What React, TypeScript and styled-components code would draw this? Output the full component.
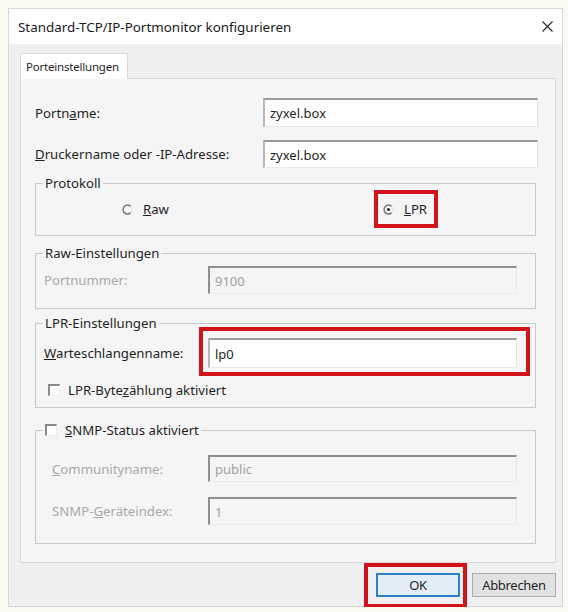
import React from "react";
import styled, { createGlobalStyle } from "styled-components";

const Global = createGlobalStyle`
  html, body { margin: 0; padding: 0; background: #fbfaf1; }
  body {
    font-family: "Noto Sans", "Open Sans", sans-serif;
    color: #1f1f1f;
    font-size: 13.2px;
  }
  * { box-sizing: border-box; }
`;

const Window = styled.div`
  margin: 8px 0 0 8px;
  width: 555px;
  height: 599px;
  background: #f0f0f0;
  border: 1px solid #d6d6d6;
  display: flex;
  flex-direction: column;
`;

const TitleBar = styled.div`
  height: 35px;
  flex: none;
  background: #ffffff;
  display: flex;
  align-items: center;
  justify-content: space-between;
  padding: 0 9px;
  font-size: 13.4px;
  color: #1a1a1a;
`;

const CloseIcon = styled.svg`
  width: 11px;
  height: 11px;
  display: block;
`;

const Body = styled.div`
  flex: 1;
  display: flex;
  flex-direction: column;
  padding: 9px 6px 0 11px;
`;

const TabStrip = styled.div`
  display: flex;
  height: 25px;
`;

const Tab = styled.div`
  position: relative;
  z-index: 1;
  width: 108px;
  height: 26px;
  margin-bottom: -1px;
  background: #ffffff;
  border: 1px solid #d9d9d9;
  border-bottom: none;
  display: flex;
  align-items: center;
  padding-left: 5px;
  font-size: 11.5px;
  letter-spacing: -0.2px;
`;

const Panel = styled.div`
  height: 485px;
  background: #f5f5f5;
  border: 1px solid #d9d9d9;
  padding: 19px 17px 0 14px;
  display: flex;
  flex-direction: column;
`;

const FieldRow = styled.div<{ $indent?: number; $gap?: number }>`
  display: flex;
  align-items: center;
  padding-left: ${(p) => p.$indent ?? 0}px;
  margin-top: ${(p) => p.$gap ?? 0}px;
`;

const Label = styled.span<{ $width: number; $disabled?: boolean }>`
  width: ${(p) => p.$width}px;
  flex: none;
  white-space: nowrap;
  color: ${(p) => (p.$disabled ? "#a9a9a9" : "#1f1f1f")};
`;

const TextBox = styled.input<{ $width: number; $height: number }>`
  width: ${(p) => p.$width}px;
  height: ${(p) => p.$height}px;
  font: inherit;
  font-size: 13px;
  margin: 0;
  padding: 0 0 0 5px;
  outline: none;
  background: #ffffff;
  color: #1f1f1f;
  border-style: solid;
  border-width: 2px 1px 1px 2px;
  border-color: #9a9a9a #e4e4e4 #e8e8e8 #b8b8b8;

  &:disabled {
    background: transparent;
    color: #a0a0a0;
    -webkit-text-fill-color: #a0a0a0;
    border-color: #8f8f8f #e8e8e8 #ececec #8f8f8f;
  }
`;

const Group = styled.fieldset<{ $gap: number }>`
  margin: ${(p) => p.$gap}px 2px 0 0;
  padding: 0;
  min-width: 0;
  border: 1px solid #cacaca;
`;

const Legend = styled.legend`
  margin-left: 7px;
  padding: 0 2px;
  line-height: 16px;
  display: flex;
  align-items: center;
  gap: 8px;
`;

const GroupBody = styled.div<{ $top: number; $bottom: number }>`
  display: flex;
  flex-direction: column;
  padding: ${(p) => p.$top}px 0 ${(p) => p.$bottom}px;
`;

const RadioRow = styled.div`
  display: flex;
  align-items: center;
  height: 16px;
  padding-left: 86px;
  gap: 214px;
`;

const RadioItem = styled.span`
  display: inline-flex;
  align-items: center;
  gap: 10px;
  height: 16px;
  line-height: 16px;
`;

const RadioGlyph = styled.svg`
  width: 11px;
  height: 11px;
  display: block;
  flex: none;
`;

const CheckRow = styled.div<{ $gap: number }>`
  display: flex;
  align-items: center;
  gap: 8px;
  height: 16px;
  padding-left: 12px;
  margin-top: ${(p) => p.$gap}px;
`;

const CheckBox = styled.span`
  width: 12px;
  height: 12px;
  flex: none;
  background: #ffffff;
  border-style: solid;
  border-width: 2px 1px 1px 2px;
  border-color: #8a8a8a #ececec #ececec #8a8a8a;
`;

/* red annotation frame drawn over a control */
const Marked = styled.span<{ $t: number; $r: number; $b: number; $l: number }>`
  position: relative;
  display: inline-flex;

  &::after {
    content: "";
    position: absolute;
    top: -${(p) => p.$t}px;
    right: -${(p) => p.$r}px;
    bottom: -${(p) => p.$b}px;
    left: -${(p) => p.$l}px;
    border: 4px solid #d3131c;
    pointer-events: none;
  }
`;

const ButtonRow = styled.div`
  display: flex;
  justify-content: flex-end;
  gap: 12px;
  margin-top: 10px;
`;

const Button = styled.button<{ $primary?: boolean }>`
  width: 84px;
  height: 24px;
  margin: 0;
  padding: 0;
  font: inherit;
  font-size: 13px;
  letter-spacing: -0.3px;
  color: #1f1f1f;
  background: ${(p) => (p.$primary ? "#e3eef8" : "#e1e1e1")};
  border: ${(p) => (p.$primary ? "2px solid #2a7fc8" : "1px solid #adadad")};
`;

const Radio = ({ checked }: { checked?: boolean }) => (
  <RadioGlyph viewBox="0 0 11 11">
    <path d="M8.6 2.4 A4.4 4.4 0 1 0 8.6 8.6" fill="none" stroke="#7a7a7a" strokeWidth="1.5" />
    <path d="M8.6 2.4 A4.4 4.4 0 0 1 8.6 8.6" fill="none" stroke="#e2e2e2" strokeWidth="1.2" />
    {checked && <circle cx="5.5" cy="5.5" r="1.6" fill="#2a2a2a" />}
  </RadioGlyph>
);

export default function App() {
  return (
    <>
      <Global />
      <Window>
        <TitleBar>
          <span>Standard-TCP/IP-Portmonitor konfigurieren</span>
          <CloseIcon viewBox="0 0 11 11">
            <path d="M0.5 0.5 L10.5 10.5 M10.5 0.5 L0.5 10.5" stroke="#2b2b2b" strokeWidth="1.2" />
          </CloseIcon>
        </TitleBar>
        <Body>
          <TabStrip>
            <Tab>Porteinstellungen</Tab>
          </TabStrip>
          <Panel>
            <FieldRow>
              <Label $width={228}>
                Portn<u>a</u>me:
              </Label>
              <TextBox $width={275} $height={29} readOnly value="zyxel.box" />
            </FieldRow>
            <FieldRow $gap={13}>
              <Label $width={228}>
                <u>D</u>ruckername oder -IP-Adresse:
              </Label>
              <TextBox $width={275} $height={28} readOnly value="zyxel.box" />
            </FieldRow>

            <Group $gap={7}>
              <Legend>Protokoll</Legend>
              <GroupBody $top={10} $bottom={18}>
                <RadioRow>
                  <RadioItem>
                    <Radio />
                    <span>
                      <u>R</u>aw
                    </span>
                  </RadioItem>
                  <Marked $t={11} $r={11} $b={11} $l={9}>
                    <RadioItem>
                      <Radio checked />
                      <span>
                        <u>L</u>PR
                      </span>
                    </RadioItem>
                  </Marked>
                </RadioRow>
              </GroupBody>
            </Group>

            <Group $gap={9}>
              <Legend>Raw-Einstellungen</Legend>
              <GroupBody $top={5} $bottom={14}>
                <FieldRow $indent={8}>
                  <Label $width={164} $disabled>
                    Portnummer:
                  </Label>
                  <TextBox $width={309} $height={28} disabled value="9100" />
                </FieldRow>
              </GroupBody>
            </Group>

            <Group $gap={6}>
              <Legend>LPR-Einstellungen</Legend>
              <GroupBody $top={7} $bottom={9}>
                <FieldRow $indent={8}>
                  <Label $width={164}>
                    <u>W</u>arteschlangenname:
                  </Label>
                  <Marked $t={11} $r={13} $b={8} $l={9}>
                    <TextBox $width={309} $height={30} readOnly value="lp0" />
                  </Marked>
                </FieldRow>
                <CheckRow $gap={14}>
                  <CheckBox />
                  <span>
                    LPR-Byte<u>z</u>ählung aktiviert
                  </span>
                </CheckRow>
              </GroupBody>
            </Group>

            <Group $gap={14}>
              <Legend>
                <CheckBox />
                <span>
                  <u>S</u>NMP-Status aktiviert
                </span>
              </Legend>
              <GroupBody $top={17} $bottom={18}>
                <FieldRow $indent={16}>
                  <Label $width={156} $disabled>
                    <u>C</u>ommunityname:
                  </Label>
                  <TextBox $width={309} $height={27} disabled value="public" />
                </FieldRow>
                <FieldRow $indent={16} $gap={15}>
                  <Label $width={156} $disabled>
                    SNMP-<u>G</u>eräteindex:
                  </Label>
                  <TextBox $width={309} $height={28} disabled value="1" />
                </FieldRow>
              </GroupBody>
            </Group>
          </Panel>
          <ButtonRow>
            <Marked $t={10} $r={7} $b={11} $l={12}>
              <Button $primary>OK</Button>
            </Marked>
            <Button>Abbrechen</Button>
          </ButtonRow>
        </Body>
      </Window>
    </>
  );
}
